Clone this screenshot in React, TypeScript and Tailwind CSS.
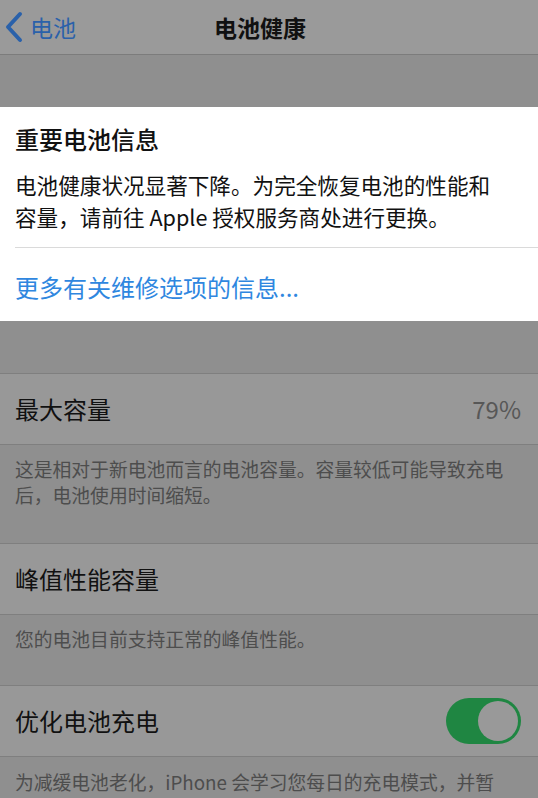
const font = { fontFamily: '"Noto Sans CJK SC", "Noto Sans", sans-serif' };

function Row({ label, right }: { label: string; right?: React.ReactNode }) {
  return (
    <div className="h-[72px] bg-[#989898] border-y border-[#7f7f7f] flex items-center justify-between pl-[15px] pr-[17px]">
      <span className="text-[24px] text-[#111] leading-none">{label}</span>
      {right}
    </div>
  );
}

function Toggle() {
  return (
    <div className="w-[75px] h-[46px] rounded-full bg-[#1f8642] p-[3px] flex justify-end">
      <div className="w-[40px] h-[40px] rounded-full bg-[#999999]" />
    </div>
  );
}

export default function App() {
  return (
    <div className="w-[538px] h-[798px] overflow-hidden bg-[#8f8f8f]" style={font}>
      {/* nav bar */}
      <div className="h-[55px] bg-[#9a9a9a] border-b border-[#7c7c7c] flex items-center relative">
        <div className="flex items-center pl-[4px] text-[#2a61aa]">
          <svg width="20" height="32" viewBox="0 0 20 32" fill="none">
            <path d="M16 3 L4 16 L16 29" stroke="#2a61aa" strokeWidth="4" strokeLinecap="round" strokeLinejoin="round" />
          </svg>
          <span className="text-[23px] ml-[6px] leading-none">电池</span>
        </div>
        <div className="absolute left-0 right-[18px] top-0 h-[54px] flex items-center justify-center">
          <span className="text-[23px] font-bold text-[#111] leading-none">电池健康</span>
        </div>
      </div>

      <div className="h-[52px]" />

      {/* info card */}
      <div className="bg-white pl-[15px] pt-[16px] pb-[18px]">
        <div className="text-[24px] leading-[32px] font-medium text-[#111]">重要电池信息</div>
        <div className="mt-[14px] w-[485px] text-[21.6px] leading-[32px] text-[#111]">
          电池健康状况显著下降。为完全恢复电池的性能和容量，请前往 Apple 授权服务商处进行更换。
        </div>
        <div className="mt-[14px] h-px bg-[#dadada]" />
        <div className="mt-[23px] text-[24px] leading-[32px] text-[#2f87df]">更多有关维修选项的信息...</div>
      </div>

      <div className="h-[52px]" />

      <Row label="最大容量" right={<span className="text-[24px] text-[#575757] leading-none">79%</span>} />
      <div className="pl-[15px] pr-[20px] pt-[11px] pb-[35px] text-[18.8px] leading-[26px] text-[#4d4d4d]">
        这是相对于新电池而言的电池容量。容量较低可能导致充电后，电池使用时间缩短。
      </div>

      <Row label="峰值性能容量" />
      <div className="pl-[15px] pr-[20px] pt-[11px] pb-[33px] text-[18.8px] leading-[26px] text-[#4d4d4d]">
        您的电池目前支持正常的峰值性能。
      </div>

      <Row label="优化电池充电" right={<Toggle />} />
      <div className="pl-[15px] pr-[42px] pt-[12px] text-[18.8px] leading-[26px] text-[#4d4d4d]">
        为减缓电池老化，iPhone 会学习您每日的充电模式，并暂时将电池充电限制在 80%，直到您需要用机时为止。
      </div>
    </div>
  );
}
